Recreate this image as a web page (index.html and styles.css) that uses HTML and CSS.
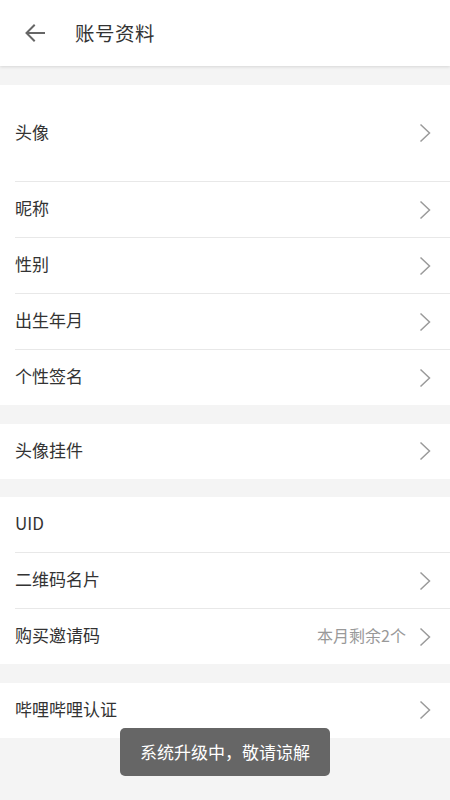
FILE: index.html
```html
<!DOCTYPE html>
<html lang="zh">
<head>
<meta charset="utf-8">
<link rel="stylesheet" href="styles.css">
</head>
<body>
<header class="topbar">
  <svg class="back" width="24" height="24" viewBox="0 0 24 24"><path d="M21 12H4M11 4.5L3.5 12l7.5 7.5" fill="none" stroke="#666" stroke-width="2" stroke-linecap="square"/></svg>
  <h1 class="title">账号资料</h1>
</header>
<main class="content">
  <section class="group">
    <div class="row row-tall"><span class="label">头像</span><svg class="chev" width="12" height="20" viewBox="0 0 12 20"><path d="M1.5 1.5L10.5 10L1.5 18.5" fill="none" stroke="#9a9a9a" stroke-width="1.5"/></svg></div>
    <div class="row"><span class="label">昵称</span><svg class="chev" width="12" height="20" viewBox="0 0 12 20"><path d="M1.5 1.5L10.5 10L1.5 18.5" fill="none" stroke="#9a9a9a" stroke-width="1.5"/></svg></div>
    <div class="row"><span class="label">性别</span><svg class="chev" width="12" height="20" viewBox="0 0 12 20"><path d="M1.5 1.5L10.5 10L1.5 18.5" fill="none" stroke="#9a9a9a" stroke-width="1.5"/></svg></div>
    <div class="row"><span class="label">出生年月</span><svg class="chev" width="12" height="20" viewBox="0 0 12 20"><path d="M1.5 1.5L10.5 10L1.5 18.5" fill="none" stroke="#9a9a9a" stroke-width="1.5"/></svg></div>
    <div class="row"><span class="label">个性签名</span><svg class="chev" width="12" height="20" viewBox="0 0 12 20"><path d="M1.5 1.5L10.5 10L1.5 18.5" fill="none" stroke="#9a9a9a" stroke-width="1.5"/></svg></div>
  </section>
  <section class="group">
    <div class="row"><span class="label">头像挂件</span><svg class="chev" width="12" height="20" viewBox="0 0 12 20"><path d="M1.5 1.5L10.5 10L1.5 18.5" fill="none" stroke="#9a9a9a" stroke-width="1.5"/></svg></div>
  </section>
  <section class="group">
    <div class="row"><span class="label">UID</span></div>
    <div class="row"><span class="label">二维码名片</span><svg class="chev" width="12" height="20" viewBox="0 0 12 20"><path d="M1.5 1.5L10.5 10L1.5 18.5" fill="none" stroke="#9a9a9a" stroke-width="1.5"/></svg></div>
    <div class="row"><span class="label">购买邀请码</span><span class="value">本月剩余2个</span><svg class="chev" width="12" height="20" viewBox="0 0 12 20"><path d="M1.5 1.5L10.5 10L1.5 18.5" fill="none" stroke="#9a9a9a" stroke-width="1.5"/></svg></div>
  </section>
  <section class="group">
    <div class="row"><span class="label">哔哩哔哩认证</span><svg class="chev" width="12" height="20" viewBox="0 0 12 20"><path d="M1.5 1.5L10.5 10L1.5 18.5" fill="none" stroke="#9a9a9a" stroke-width="1.5"/></svg></div>
  </section>
</main>
<div class="toast">系统升级中，敬请谅解</div>
</body>
</html>
```
FILE: styles.css
```css
* { box-sizing: border-box; }
html, body {
  margin: 0;
  padding: 0;
  background: #f4f4f4;
  font-family: "Noto Sans CJK SC", "Noto Sans", sans-serif;
  color: #333;
}
body { height: 800px; overflow: hidden; }
.topbar {
  height: 66px;
  background: #fff;
  display: flex;
  align-items: center;
  padding-left: 23px;
  box-shadow: 0 1px 3px rgba(0,0,0,0.12);
  position: relative;
  z-index: 1;
}
.back { display: block; }
.title {
  margin: 0 0 2px 28px;
  font-size: 19.5px;
  font-weight: normal;
  color: #333;
  letter-spacing: 0.5px;
}
.content {
  display: flex;
  flex-direction: column;
  gap: 18.5px;
  padding-top: 19px;
}
.group {
  background: #fff;
  display: flex;
  flex-direction: column;
}
.row {
  height: 56px;
  display: flex;
  align-items: center;
  padding: 0 19px 1px 15px;
  position: relative;
}
.row::after {
  content: "";
  position: absolute;
  left: 15px;
  right: 0;
  bottom: 0;
  height: 1px;
  background: #e8e8e8;
}
.row:last-child { height: 55px; padding-bottom: 0; }
.row:last-child::after { display: none; }
.row.row-tall { height: 97px; }
.label {
  flex: 1;
  font-size: 17px;
  color: #333;
  margin-bottom: 4px;
}
.value {
  font-size: 16px;
  color: #999;
  margin-right: 13px;
  margin-bottom: 4px;
}
.chev { display: block; }
.toast {
  position: fixed;
  left: 50%;
  top: 728px;
  transform: translateX(-50%);
  width: 210px;
  height: 48px;
  background: #666;
  color: #fff;
  border-radius: 5px;
  display: flex;
  align-items: center;
  justify-content: center;
  font-size: 17px;
  padding-bottom: 2px;
}
```
